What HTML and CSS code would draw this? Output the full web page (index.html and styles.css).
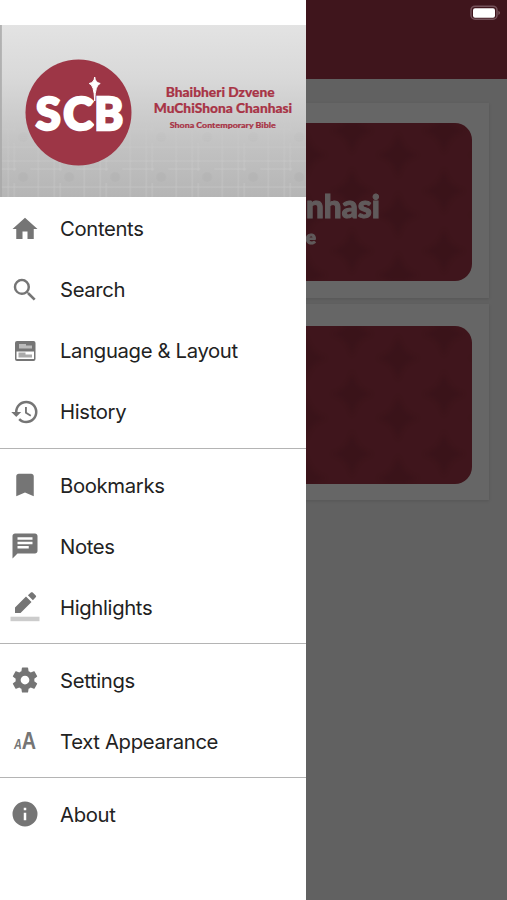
FILE: index.html
```
<!DOCTYPE html>
<html lang="sn">
<head>
    <meta charset="UTF-8">
    <meta name="viewport" content="width=device-width, initial-scale=1.0">
    <title>Shona Contemporary Bible</title>
    <link rel="stylesheet" href="styles.css">
</head>
<body>
    <div class="app">
        <header class="app-header">
            <svg class="battery" width="31" height="16" viewBox="0 0 31 16">
                <rect x="1" y="1.200" width="26" height="13" rx="4" fill="none" stroke="#75525a" stroke-width="1.500"/>
                <rect x="3" y="3.200" width="22" height="9.500" rx="2" fill="#fff"/>
                <path d="M28.500 5.700c1.800.8 1.800 3.400 0 4.200z" fill="#8c6a70"/>
            </svg>
        </header>
        <main class="cards">
            <div class="card">
                <svg class="tile" viewBox="0 0 437 158">
                    <defs>
                        <pattern id="stars" x="41" y="2" width="92" height="60" patternUnits="userSpaceOnUse">
                            <path d="M46 8Q50 26 66 30Q50 34 46 52Q42 34 26 30Q42 26 46 8Z M0 -16Q4 2 20 6Q4 10 0 28Q-4 10 -20 6Q-4 2 0 -16Z M92 -16Q96 2 112 6Q96 10 92 28Q88 10 72 6Q88 2 92 -16Z M0 44Q4 62 20 66Q4 70 0 88Q-4 70 -20 66Q-4 62 0 44Z M92 44Q96 62 112 66Q96 70 92 88Q88 70 72 66Q88 62 92 44Z" fill="#842c3a"/>
                        </pattern>
                        <filter id="soften"><feGaussianBlur stdDeviation="2"/></filter>
                        <clipPath id="rounded"><rect width="437" height="158" rx="17"/></clipPath>
                    </defs>
                    <rect width="437" height="158" rx="17" fill="#9d3646"/>
                    <g clip-path="url(#rounded)">
                        <rect width="437" height="158" fill="url(#stars)" filter="url(#soften)" opacity=".45"/>
                    </g>
                    <text class="tile-title" x="345" y="95" text-anchor="end">Chanhasi</text>
                    <text class="tile-sub" x="281" y="121" text-anchor="end">Bible</text>
                </svg>
            </div>
            <div class="card">
                <svg class="tile" viewBox="0 0 437 158">
                    <rect width="437" height="158" rx="17" fill="#9d3646"/>
                    <g clip-path="url(#rounded)">
                        <rect width="437" height="158" fill="url(#stars)" filter="url(#soften)" opacity=".45"/>
                    </g>
                </svg>
            </div>
        </main>
    </div>

    <div class="overlay"></div>

    <nav class="drawer">
        <svg class="banner" width="306" height="172" viewBox="0 0 306 172">
            <defs>
                <linearGradient id="silver" x1="0" y1="0" x2="0" y2="1">
                    <stop offset="0" stop-color="#e3e3e3"/>
                    <stop offset=".3" stop-color="#d9d9d9"/>
                    <stop offset=".7" stop-color="#c2c2c2"/>
                    <stop offset="1" stop-color="#b5b5b5"/>
                </linearGradient>
                <linearGradient id="fade" x1="0" y1="0" x2="0" y2="1">
                    <stop offset=".5" stop-color="#000"/>
                    <stop offset=".85" stop-color="#fff"/>
                </linearGradient>
                <mask id="lower"><rect width="306" height="172" fill="url(#fade)"/></mask>
                <pattern id="weave" x="0" y="10" width="46" height="40" patternUnits="userSpaceOnUse">
                    <path d="M0 6H46M0 14H16M30 14H46M0 32H46M8 0V40M14 0V16M14 28V40M38 0V40" fill="none" stroke="#dedede" stroke-width=".7"/>
                    <circle cx="23" cy="22" r="5" fill="#999" opacity=".3"/>
                </pattern>
            </defs>
            <rect width="306" height="172" fill="url(#silver)"/>
            <rect width="306" height="172" fill="url(#weave)" mask="url(#lower)" opacity=".4"/>
            <rect width="1.500" height="172" fill="#a5a5a5"/>
            <circle cx="78.300" cy="87.500" r="53" fill="#9d3646"/>
            <g class="logo-text">
                <text x="35.500" y="105" textLength="25" lengthAdjust="spacingAndGlyphs">S</text>
                <text x="63" y="105" textLength="30" lengthAdjust="spacingAndGlyphs">C</text>
                <text x="94" y="105" textLength="29" lengthAdjust="spacingAndGlyphs">B</text>
            </g>
            <!-- star over the gap between C and B -->
            <path d="M94.500 52Q95 57.500 100 58.500Q95 59.500 94.500 76Q94 59.500 89 58.500Q94 57.500 94.500 52Z" fill="#fff" stroke="#fff" stroke-width="1"/>
            <path d="M94.800 76V106" stroke="#9d3646" stroke-width="1.600"/>
            <g class="banner-text">
                <text x="165.500" y="71.500" textLength="109" lengthAdjust="spacingAndGlyphs">Bhaibheri Dzvene</text>
                <text x="153.500" y="87.500" textLength="138.500" lengthAdjust="spacingAndGlyphs">MuChiShona Chanhasi</text>
                <text class="small" x="169.500" y="102.500" textLength="106" lengthAdjust="spacingAndGlyphs">Shona Contemporary Bible</text>
            </g>
        </svg>

        <ul class="menu">
            <li>
                <svg class="icon" viewBox="0 0 24 24"><path d="M10 20v-6h4v6h5v-8h3L12 3 2 12h3v8z"/></svg>
                <span>Contents</span>
            </li>
            <li>
                <svg class="icon" viewBox="0 0 24 24"><path d="M15.500 14h-.79l-.28-.27A6.470 6.470 0 0 0 16 9.500 6.500 6.500 0 1 0 9.500 16c1.610 0 3.090-.59 4.230-1.570l.27.28v.79l5 4.990L20.490 19l-4.990-5zm-6 0C7.010 14 5 11.990 5 9.500S7.010 5 9.500 5 14 7.010 14 9.500 11.990 14 9.500 14z"/></svg>
                <span>Search</span>
            </li>
            <li>
                <svg class="icon" viewBox="0 0 30 30">
                    <rect x="5" y="5" width="20.500" height="20" rx="2"/>
                    <path d="M6.500 15.500h17.500v7.500h-17.500z" fill="#fff"/>
                    <path d="M9 8h7v1.500h6v3h-13z" fill="#bbb"/>
                    <path d="M8.500 16.500h7v2h6.500v3h-13.500z" fill="#aaa"/>
                </svg>
                <span>Language &amp; Layout</span>
            </li>
            <li>
                <svg class="icon" viewBox="0 0 24 24"><path d="M13 3a9 9 0 0 0-9 9H1l3.890 3.890.07.14L9 12H6c0-3.870 3.130-7 7-7s7 3.130 7 7-3.130 7-7 7c-1.930 0-3.680-.79-4.940-2.060l-1.420 1.420A8.954 8.954 0 0 0 13 21a9 9 0 0 0 0-18zm-1 5v5l4.280 2.540.72-1.210-3.500-2.080V8H12z"/></svg>
                <span>History</span>
            </li>
        </ul>
        <ul class="menu">
            <li>
                <svg class="icon" viewBox="0 0 24 24"><path d="M17 3H7c-1.100 0-1.990.9-1.990 2L5 21l7-3 7 3V5c0-1.100-.9-2-2-2z"/></svg>
                <span>Bookmarks</span>
            </li>
            <li>
                <svg class="icon" viewBox="0 0 24 24"><path fill-rule="evenodd" d="M20 2H4c-1.100 0-2 .9-2 2v18l4-4h14c1.100 0 2-.9 2-2V4c0-1.100-.9-2-2-2zM6 5h12v2H6zM6 8.500h12v2H6zM6 12h9v2H6z"/></svg>
                <span>Notes</span>
            </li>
            <li>
                <svg class="icon" viewBox="0 0 30 30">
                    <path d="M5 15.500v5.500h5.500L21.500 10l-5.500-5.500zM25.700 5.300c.6-.6.6-1.200 0-1.800L22.700.6c-.6-.6-1.200-.6-1.800 0l-3 2.600 5 5z"/>
                    <path d="M.5 24.700h29v4.500H.5z" fill="#ccc"/>
                </svg>
                <span>Highlights</span>
            </li>
        </ul>
        <ul class="menu">
            <li>
                <svg class="icon" viewBox="0 0 24 24"><path d="M19.430 12.980c.04-.32.07-.64.07-.98s-.03-.66-.07-.98l2.110-1.650c.19-.15.24-.42.12-.64l-2-3.460c-.12-.22-.39-.3-.61-.22l-2.490 1c-.52-.4-1.080-.73-1.690-.98l-.38-2.650A.488.488 0 0 0 14 2h-4c-.25 0-.46.18-.49.42l-.38 2.650c-.61.25-1.170.59-1.690.98l-2.490-1c-.23-.09-.49 0-.61.22l-2 3.460c-.13.22-.07.49.12.64l2.110 1.650c-.04.32-.07.65-.07.98s.03.66.07.98l-2.110 1.650c-.19.15-.24.42-.12.64l2 3.460c.12.22.39.3.61.22l2.490-1c.52.4 1.080.73 1.690.98l.38 2.650c.03.24.24.42.49.42h4c.25 0 .46-.18.49-.42l.38-2.650c.61-.25 1.170-.59 1.690-.98l2.490 1c.23.09.49 0 .61-.22l2-3.460c.12-.22.07-.49-.12-.64l-2.110-1.650zM12 15.500c-1.930 0-3.500-1.570-3.500-3.500s1.570-3.500 3.500-3.500 3.500 1.570 3.500 3.500-1.570 3.500-3.500 3.500z"/></svg>
                <span>Settings</span>
            </li>
            <li>
                <svg class="icon letters" viewBox="0 0 30 30">
                    <text class="letter-small" x="4" y="23" textLength="7.500" lengthAdjust="spacingAndGlyphs">A</text>
                    <text x="11.700" y="23" textLength="14" lengthAdjust="spacingAndGlyphs">A</text>
                </svg>
                <span>Text Appearance</span>
            </li>
        </ul>
        <ul class="menu">
            <li>
                <svg class="icon" viewBox="0 0 24 24"><path d="M12 2a10 10 0 1 0 0 20 10 10 0 0 0 0-20zm1 15h-2v-6h2v6zm0-8h-2V7h2v2z"/></svg>
                <span>About</span>
            </li>
        </ul>
    </nav>
</body>
</html>
```
FILE: styles.css
```
* {
    box-sizing: border-box;
}
body {
    margin: 0;
    height: 900px;
    overflow: hidden;
    font-family: Inter, "Liberation Sans", sans-serif;
    background-color: #f2f2f2;
}
.app-header {
    display: flex;
    justify-content: flex-end;
    height: 79px;
    padding: 5px 6px 0 0;
    background-color: #9d3646;
}
.battery {
    position: relative;
    z-index: 1;
}
.cards {
    display: flex;
    flex-direction: column;
    gap: 6px;
    padding: 24px 18px 0;
}
.card {
    height: 195px;
    padding: 20px 17px;
    background-color: #fff;
    box-shadow: 0 1px 3px rgba(0,0,0,0.12);
}
.card + .card {
    height: 196px;
    padding-top: 22px;
}
.tile {
    display: block;
    width: 437px;
    height: 158px;
}
.tile text {
    font-family: Lato, sans-serif;
    font-weight: 900;
    fill: #fff;
    stroke: #fff;
    stroke-width: 1px;
    opacity: 0.85;
}
.tile-title {
    font-size: 31.5px;
}
.tile-sub {
    font-size: 19px;
}
.overlay {
    position: absolute;
    inset: 0;
    background-color: rgba(0,0,0,0.6);
}
/* side menu, lies over the dimmed page */
.drawer {
    position: absolute;
    top: 0;
    left: 0;
    z-index: 2;
    width: 306.4px;
    height: 900px;
    padding-top: 25px;
    background-color: #fff;
}
.banner {
    display: block;
    width: 100%;
    height: 172px;
}
.logo-text {
    font-family: Lato, sans-serif;
    font-weight: 900;
    font-size: 45px;
    fill: #fff;
    stroke: #fff;
    stroke-width: 2.5px;
}
.banner-text {
    font-family: Lato, sans-serif;
    font-weight: 900;
    font-size: 13px;
    fill: #a83446;
    stroke: #a83446;
    stroke-width: 0.2px;
}
.banner-text .small {
    font-size: 8px;
}
.menu {
    list-style: none;
    margin: 0;
    padding: 5.5px 0;
    border-bottom: 1px solid #b4b4b4;
}
.banner + .menu {
    padding: 1px 0 6px;
}
.menu:last-child {
    border-bottom: none;
}
.menu li {
    display: flex;
    align-items: center;
    gap: 20px;
    height: 61px;
    padding-left: 10px;
    font-size: 20.3px;
    letter-spacing: -0.35px;
    color: #222;
}
.icon {
    width: 30px;
    height: 30px;
    fill: #757575;
}
.letters {
    font-family: "Liberation Sans", sans-serif;
    font-size: 23px;
    font-weight: bold;
}
.letter-small {
    font-size: 15px;
    font-style: italic;
}
```
